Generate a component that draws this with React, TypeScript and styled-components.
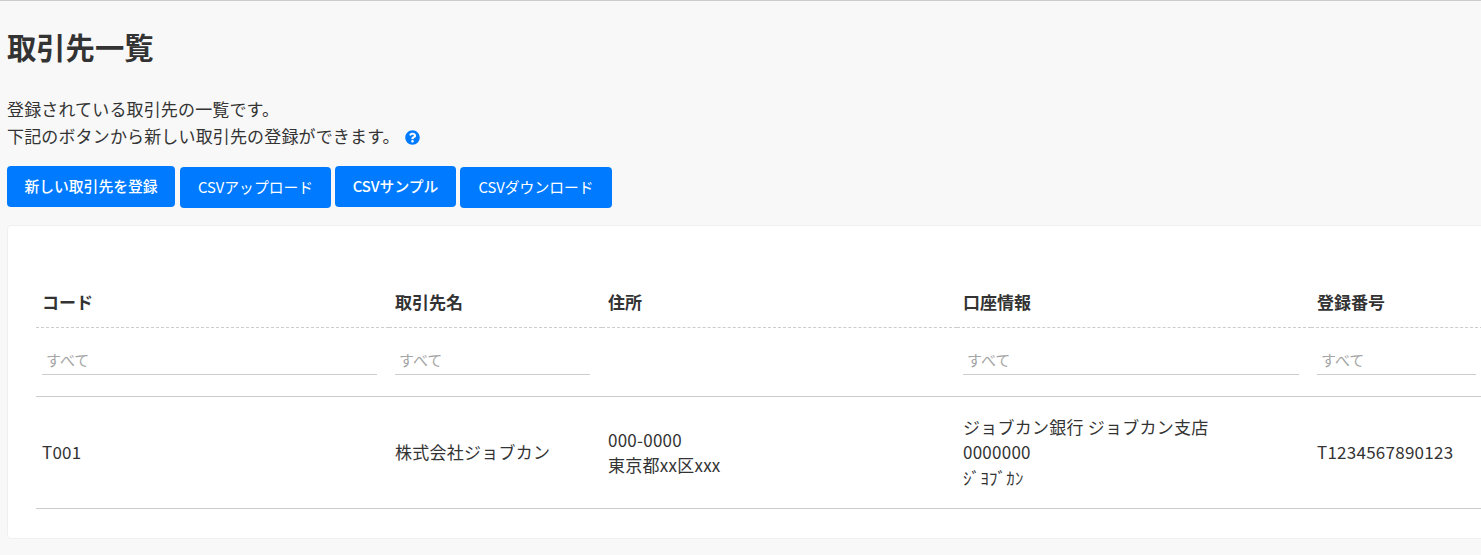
import React from "react";
import styled, { createGlobalStyle } from "styled-components";
import { FaQuestionCircle } from "react-icons/fa";

const GlobalStyle = createGlobalStyle`
  html, body {
    margin: 0;
    padding: 0;
    height: 555px;
    overflow: hidden;
    background: #f8f8f8;
    color: #333;
    font-family: "Noto Sans CJK JP", "Noto Sans", sans-serif;
  }
  * {
    box-sizing: border-box;
  }
`;

const Page = styled.div`
  width: 1481px;
  height: 555px;
  padding: 0 0 0 7px;
  border-top: 1px solid #ccc;
  overflow: hidden;
`;

const Title = styled.h1`
  margin: 0;
  padding-top: 24px;
  height: 95px;
  font-size: 29.3px;
  line-height: 42px;
  font-weight: 700;
`;

const Description = styled.p`
  margin: 0;
  font-size: 17px;
  line-height: 26.5px;
  letter-spacing: 0.15px;
`;

const HelpIcon = styled(FaQuestionCircle)`
  color: #007bff;
  font-size: 15px;
  margin-left: 5px;
  vertical-align: -2px;
`;

const ButtonRow = styled.div`
  display: flex;
  align-items: flex-start;
  margin-top: 17px;
  height: 59px;
`;

const ActionButton = styled.button<{ $strong?: boolean; $width: number; $gap: number }>`
  width: ${(p) => p.$width}px;
  height: 41px;
  margin-top: ${(p) => (p.$strong ? 0 : 1)}px;
  margin-right: ${(p) => p.$gap}px;
  border: none;
  border-radius: 4px;
  background: #007bff;
  color: #fff;
  font-family: inherit;
  font-size: 14.8px;
  font-weight: ${(p) => (p.$strong ? 500 : 400)};
  padding: 0 0 2px;
`;

const Card = styled.div`
  width: 1500px;
  height: 314px;
  padding: 50px 0 0 28px;
  background: #fff;
  border: 1px solid #f0f0f0;
  border-radius: 4px;
`;

const Table = styled.table`
  table-layout: fixed;
  width: 1452px;
  border-collapse: collapse;
  font-size: 17px;
`;

const HeadCell = styled.th<{ $width: number }>`
  width: ${(p) => p.$width}px;
  height: 51px;
  padding: 0 0 0 6px;
  text-align: left;
  font-size: 17px;
  font-weight: 700;
  border-bottom: 1px dashed #ccc;
`;

const FilterCell = styled.td`
  height: 69px;
  padding: 0 12px 2px 6px;
  border-bottom: 1px solid #ccc;
  vertical-align: middle;
`;

const FilterInput = styled.input`
  display: block;
  width: 100%;
  height: 28px;
  padding: 0 4px 2px;
  border: none;
  border-bottom: 1px solid #ccc;
  background: transparent;
  font-family: inherit;
  font-size: 15px;
  outline: none;

  &::placeholder {
    color: #a5a5a5;
  }
`;

const BodyCell = styled.td`
  height: 112px;
  padding: 0 0 0 6px;
  border-bottom: 1px solid #ccc;
  line-height: 25.5px;
  letter-spacing: 0.25px;
  vertical-align: middle;
`;

const buttons = [
  { label: "新しい取引先を登録", width: 168, gap: 5, strong: true },
  { label: "CSVアップロード", width: 151, gap: 4, strong: false },
  { label: "CSVサンプル", width: 121, gap: 4, strong: true },
  { label: "CSVダウンロード", width: 152, gap: 0, strong: false },
];

const columns = [
  { label: "コード", width: 353, filter: true },
  { label: "取引先名", width: 213, filter: true },
  { label: "住所", width: 355, filter: false },
  { label: "口座情報", width: 354, filter: true },
  { label: "登録番号", width: 177, filter: true },
];

export default function App() {
  return (
    <>
      <GlobalStyle />
      <Page>
        <Title>取引先一覧</Title>
        <Description>登録されている取引先の一覧です。</Description>
        <Description>
          下記のボタンから新しい取引先の登録ができます。
          <HelpIcon />
        </Description>
        <ButtonRow>
          {buttons.map((b) => (
            <ActionButton key={b.label} $strong={b.strong} $width={b.width} $gap={b.gap}>
              {b.label}
            </ActionButton>
          ))}
        </ButtonRow>
        <Card>
          <Table>
            <thead>
              <tr>
                {columns.map((c) => (
                  <HeadCell key={c.label} $width={c.width}>
                    {c.label}
                  </HeadCell>
                ))}
              </tr>
              <tr>
                {columns.map((c) => (
                  <FilterCell key={c.label}>
                    {c.filter && <FilterInput placeholder="すべて" />}
                  </FilterCell>
                ))}
              </tr>
            </thead>
            <tbody>
              <tr>
                <BodyCell>T001</BodyCell>
                <BodyCell>株式会社ジョブカン</BodyCell>
                <BodyCell>
                  000-0000
                  <br />
                  東京都xx区xxx
                </BodyCell>
                <BodyCell>
                  ジョブカン銀行 ジョブカン支店
                  <br />
                  0000000
                  <br />
                  ｼﾞﾖﾌﾞｶﾝ
                </BodyCell>
                <BodyCell>T1234567890123</BodyCell>
              </tr>
            </tbody>
          </Table>
        </Card>
      </Page>
    </>
  );
}
